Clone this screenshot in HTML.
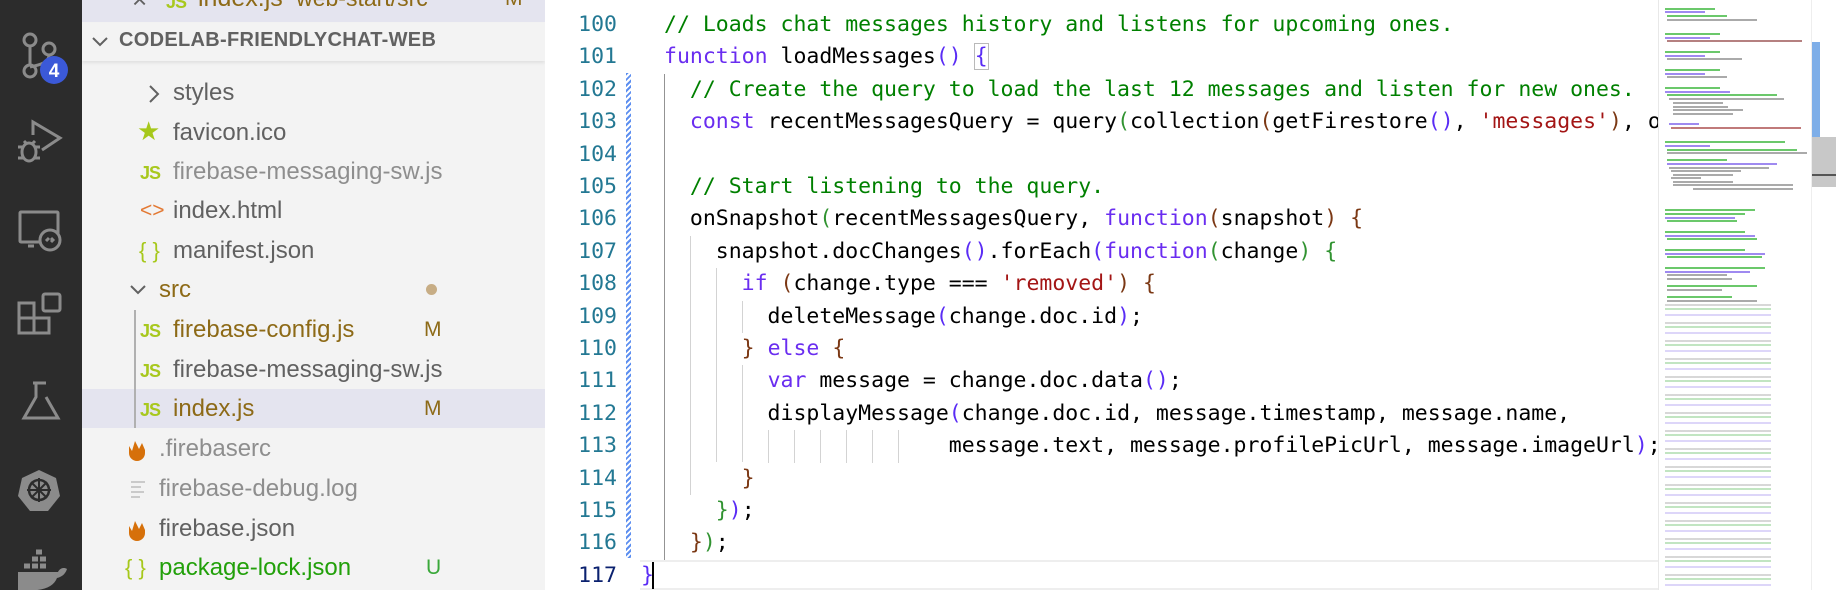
<!DOCTYPE html>
<html><head><meta charset="utf-8"><style>
*{margin:0;padding:0;box-sizing:border-box}
body{width:1836px;height:590px;overflow:hidden;background:#fff;position:relative;font-family:"Liberation Sans",sans-serif}
#act{position:absolute;left:0;top:0;width:82px;height:590px;background:#2c2c2c}
#side{position:absolute;left:82px;top:0;width:463px;height:590px;background:#f3f3f3}
.row{position:absolute;left:0;width:463px;height:40px;line-height:40px;font-size:24px;color:#616161;white-space:nowrap}
.row span.t{position:absolute}
.js{position:absolute;font-weight:bold;font-size:18px;color:#a8c81e;letter-spacing:-1px}
.st{position:absolute;left:423px;font-size:21px}
#ed{position:absolute;left:545px;top:0;width:1113px;height:590px;background:#fff}
.ln{position:absolute;left:545px;width:72px;text-align:right;font-family:"DejaVu Sans Mono",monospace;font-size:21.5px;color:#237893;height:32.4px;line-height:32.4px}
.cl{position:absolute;left:664px;font-family:"DejaVu Sans Mono",monospace;font-size:21.5px;color:#000;white-space:pre;height:32.4px;line-height:32.4px}
.c{color:#008000}.k{color:#6a2df0}.b1{color:#5a2cf5}.b2{color:#319331}.b3{color:#7b3814}.s{color:#a31515}
.g{position:absolute;width:1px;background:#d3d3d3}
#mm{position:absolute;left:1658px;top:0;width:153px;height:590px;background:#fff;overflow:hidden}
.m{position:absolute;height:2px}
</style></head><body>
<div id="act">
<svg width="82" height="590" fill="none" stroke="#8b8b8b" stroke-width="3">
<circle cx="30" cy="40" r="6"/><circle cx="49" cy="49" r="6"/><circle cx="30" cy="71" r="6"/>
<path d="M30 46V65M49 55c0 8-10 10-19 12"/>
<circle cx="54" cy="70" r="14" fill="#3b59d8" stroke="none"/>
<text x="54" y="77" fill="#fff" stroke="none" font-family="Liberation Sans" font-weight="bold" font-size="19" text-anchor="middle">4</text>
<path d="M33 135V122L60 138L42 150"/>
<ellipse cx="29" cy="152" rx="7" ry="9"/><path d="M18 147h6M34 147h6M18 158h6M34 158h6M24 141l3 3M35 141l-3 3"/>
<rect x="20" y="212" width="38" height="30" rx="1"/><path d="M34 246h-6"/><circle cx="50" cy="240" r="10" fill="#2c2c2c"/><path d="M46 241l3-3M51 242l3-3 M51 238l3 3"/>
<rect x="19" y="318" width="15" height="15"/><rect x="34" y="318" width="15" height="15"/><rect x="19" y="303" width="15" height="15"/><rect x="43" y="294" width="17" height="17" rx="2"/>
<path d="M33 383h13M36 383v14L24 418h34L46 397"/>
<path d="M39 470l17 8 4 18-12 15H30L18 496l4-18z" fill="#8b8b8b" stroke="none"/>
<circle cx="39" cy="490" r="10" stroke="#2c2c2c" stroke-width="2.5"/><path d="M39 478v24M27 490h24M31 482l16 16M47 482l-16 16" stroke="#2c2c2c" stroke-width="2"/>
<path d="M18 572h40c2-4 6-5 9-3-2 6-6 8-10 9-4 10-16 14-39 12z" fill="#8b8b8b" stroke="none"/>
<path d="M24 566h6M32 566h6M40 566h6M32 559h6M40 559h6M36 552h6" stroke-width="5"/>
</svg></div>
<div id="side">
<div style="position:absolute;left:0;top:0;width:463px;height:22px;background:#e4e4ef"></div>
<div style="position:absolute;left:50px;top:-16px;font-size:26px;color:#616161">×</div>
<div class="js" style="left:84px;top:-8px">JS</div>
<div style="position:absolute;left:116px;top:-16px;font-size:25px;color:#8d6a17">index.js <span style="font-size:23px">&nbsp;web-start/src</span></div>
<div style="position:absolute;left:423px;top:-13px;font-size:21px;color:#8d6a17">M</div>
<div style="position:absolute;left:0;top:23px;width:463px;height:38px;background:#f3f3f3;box-shadow:0 2px 3px rgba(0,0,0,.08)"></div>
<svg style="position:absolute;left:10px;top:36px" width="16" height="12"><path d="M1 2l7 7 7-7" stroke="#616161" stroke-width="2" fill="none"/></svg>
<div style="position:absolute;left:37px;top:29px;font-size:20px;font-weight:bold;color:#616161;letter-spacing:.3px">CODELAB-FRIENDLYCHAT-WEB</div>

<div class="row" style="top:73px"><svg style="position:absolute;left:66px;top:12px" width="12" height="18"><path d="M2 1l8 8-8 8" stroke="#616161" stroke-width="2" fill="none"/></svg><span class="t" style="left:91px">styles</span></div>
<div class="row" style="top:113px"><span style="position:absolute;left:55px;top:-2px;color:#a6c81a;font-size:26px">★</span><span class="t" style="left:91px">favicon.ico</span></div>
<div class="row" style="top:152px"><span class="js" style="left:58px;top:1px">JS</span><span class="t" style="left:91px;color:#8e8e8e">firebase-messaging-sw.js</span></div>
<div class="row" style="top:191px"><span style="position:absolute;left:58px;color:#e37933;font-size:21px">&lt;&gt;</span><span class="t" style="left:91px">index.html</span></div>
<div class="row" style="top:231px"><span style="position:absolute;left:57px;color:#a6c81a;font-size:22px">{ }</span><span class="t" style="left:91px">manifest.json</span></div>
<div class="row" style="top:270px"><svg style="position:absolute;left:48px;top:14px" width="18" height="12"><path d="M1 2l7 7 7-7" stroke="#616161" stroke-width="2" fill="none"/></svg><span class="t" style="left:77px;color:#8d6a17">src</span><span style="position:absolute;left:344px;top:14px;width:11px;height:11px;border-radius:50%;background:#c7ad85"></span></div>
<div style="position:absolute;left:52px;top:310px;width:2px;height:118px;background:#b0b0b0"></div>
<div class="row" style="top:310px"><span class="js" style="left:58px;top:1px">JS</span><span class="t" style="left:91px;color:#8d6a17">firebase-config.js</span><span class="st" style="color:#8d6a17;left:342px">M</span></div>
<div class="row" style="top:350px"><span class="js" style="left:58px;top:1px">JS</span><span class="t" style="left:91px">firebase-messaging-sw.js</span></div>
<div style="position:absolute;left:0;top:389px;width:463px;height:39px;background:#e4e4ef"></div>
<div style="position:absolute;left:52px;top:389px;width:2px;height:39px;background:#b0b0b0"></div>
<div class="row" style="top:389px"><span class="js" style="left:58px;top:1px">JS</span><span class="t" style="left:91px;color:#8d6a17">index.js</span><span class="st" style="color:#8d6a17;left:342px">M</span></div>
<div class="row" style="top:429px"><svg style="position:absolute;left:45px;top:7px" width="20" height="26"><path d="M2 10l3 5 3-10 4 8 3-6 3 7v3a8 8 0 0 1-16 0z" fill="#d6700a"/></svg><span class="t" style="left:77px;color:#8e8e8e">.firebaserc</span></div>
<div class="row" style="top:469px"><svg style="position:absolute;left:48px;top:10px" width="20" height="20"><path d="M1 3h14M1 8h10M1 13h13M1 18h9" stroke="#bdbdbd" stroke-width="1.5"/></svg><span class="t" style="left:77px;color:#8e8e8e">firebase-debug.log</span></div>
<div class="row" style="top:509px"><svg style="position:absolute;left:45px;top:7px" width="20" height="26"><path d="M2 10l3 5 3-10 4 8 3-6 3 7v3a8 8 0 0 1-16 0z" fill="#d6700a"/></svg><span class="t" style="left:77px">firebase.json</span></div>
<div class="row" style="top:548px"><span style="position:absolute;left:43px;color:#a6c81a;font-size:22px">{ }</span><span class="t" style="left:77px;color:#22a00a">package-lock.json</span><span class="st" style="color:#3aa83a;left:344px">U</span></div>
</div>

<div id="ed"></div>
<div style="position:absolute;left:626px;top:73px;width:5px;height:485px;background:repeating-linear-gradient(135deg,#5d8ff0 0 2px,#fff 2px 4px)"></div>
<div style="position:absolute;left:640px;top:560px;width:1018px;height:30px;border-top:2px solid #eee;border-bottom:2px solid #eee"></div>

<div class="ln" style="top:9px">100</div><div class="ln" style="top:41.4px">101</div><div class="ln" style="top:73.8px">102</div><div class="ln" style="top:106.2px">103</div><div class="ln" style="top:138.6px">104</div><div class="ln" style="top:171px">105</div><div class="ln" style="top:203.4px">106</div><div class="ln" style="top:235.8px">107</div><div class="ln" style="top:268.2px">108</div><div class="ln" style="top:300.6px">109</div><div class="ln" style="top:333px">110</div><div class="ln" style="top:365.4px">111</div><div class="ln" style="top:397.8px">112</div><div class="ln" style="top:430.2px">113</div><div class="ln" style="top:462.6px">114</div><div class="ln" style="top:495px">115</div><div class="ln" style="top:527.4px">116</div><div class="ln" style="top:559.8px;color:#0b216f">117</div>

<div class="g" style="left:664px;top:73.8px;height:486px;background:#939393"></div>
<div class="g" style="left:690px;top:235.8px;height:259px"></div>
<div class="g" style="left:716px;top:268.2px;height:194px"></div>
<div class="g" style="left:742px;top:300.6px;height:32.4px"></div>
<div class="g" style="left:742px;top:365.4px;height:97px"></div>
<div class="g" style="left:768px;top:430.2px;height:32.4px"></div>
<div class="g" style="left:794px;top:430.2px;height:32.4px"></div>
<div class="g" style="left:820px;top:430.2px;height:32.4px"></div>
<div class="g" style="left:846px;top:430.2px;height:32.4px"></div>
<div class="g" style="left:872px;top:430.2px;height:32.4px"></div>
<div class="g" style="left:898px;top:430.2px;height:32.4px"></div>

<div class="cl" style="top:9px"><span class="c">// Loads chat messages history and listens for upcoming ones.</span></div>
<div class="cl" style="top:41.4px"><span class="k">function</span> loadMessages<span class="b1">()</span> <span class="b1" style="outline:1px solid #b9b9b9">{</span></div>
<div class="cl" style="top:73.8px">  <span class="c">// Create the query to load the last 12 messages and listen for new ones.</span></div>
<div class="cl" style="top:106.2px">  <span class="k">const</span> recentMessagesQuery = query<span class="b2">(</span>collection<span class="b3">(</span>getFirestore<span class="b1">()</span>, <span class="s">'messages'</span><span class="b3">)</span>, orderBy</div>
<div class="cl" style="top:171px">  <span class="c">// Start listening to the query.</span></div>
<div class="cl" style="top:203.4px">  onSnapshot<span class="b2">(</span>recentMessagesQuery, <span class="k">function</span><span class="b3">(</span>snapshot<span class="b3">)</span> <span class="b3">{</span></div>
<div class="cl" style="top:235.8px">    snapshot.docChanges<span class="b1">()</span>.forEach<span class="b1">(</span><span class="k">function</span><span class="b2">(</span>change<span class="b2">)</span> <span class="b2">{</span></div>
<div class="cl" style="top:268.2px">      <span class="k">if</span> <span class="b3">(</span>change.type === <span class="s">'removed'</span><span class="b3">)</span> <span class="b3">{</span></div>
<div class="cl" style="top:300.6px">        deleteMessage<span class="b1">(</span>change.doc.id<span class="b1">)</span>;</div>
<div class="cl" style="top:333px">      <span class="b3">}</span> <span class="k">else</span> <span class="b3">{</span></div>
<div class="cl" style="top:365.4px">        <span class="k">var</span> message = change.doc.data<span class="b1">()</span>;</div>
<div class="cl" style="top:397.8px">        displayMessage<span class="b1">(</span>change.doc.id, message.timestamp, message.name,</div>
<div class="cl" style="top:430.2px">                      message.text, message.profilePicUrl, message.imageUrl<span class="b1">)</span>;</div>
<div class="cl" style="top:462.6px">      <span class="b3">}</span></div>
<div class="cl" style="top:495px">    <span class="b2">}</span><span class="b1">)</span>;</div>
<div class="cl" style="top:527.4px">  <span class="b3">}</span><span class="b2">)</span>;</div>
<div class="cl" style="top:559.8px;left:641px"><span class="b1">}</span></div>
<div style="position:absolute;left:652px;top:562px;width:2px;height:27px;background:#000"></div>

<div id="mm">
<div style="position:absolute;left:0;top:0;width:1px;height:590px;background:#e8e8e8"></div>
<div class="m" style="left:7px;top:8px;width:50px;background:#6bc86b"></div>
<div class="m" style="left:7px;top:11px;width:40px;background:#9f8af0"></div>
<div class="m" style="left:9px;top:15px;width:60px;background:#6bc86b"></div>
<div class="m" style="left:9px;top:19px;width:90px;background:#aaa"></div>
<div class="m" style="left:7px;top:33px;width:55px;background:#6bc86b"></div>
<div class="m" style="left:7px;top:37px;width:45px;background:#9f8af0"></div>
<div class="m" style="left:9px;top:40px;width:135px;background:#b58080"></div>
<div class="m" style="left:7px;top:51px;width:55px;background:#6bc86b"></div>
<div class="m" style="left:7px;top:55px;width:40px;background:#9f8af0"></div>
<div class="m" style="left:9px;top:58px;width:75px;background:#aaa"></div>
<div class="m" style="left:7px;top:69px;width:55px;background:#6bc86b"></div>
<div class="m" style="left:7px;top:73px;width:40px;background:#9f8af0"></div>
<div class="m" style="left:9px;top:76px;width:60px;background:#aaa"></div>
<div class="m" style="left:7px;top:87px;width:55px;background:#6bc86b"></div>
<div class="m" style="left:7px;top:91px;width:65px;background:#9f8af0"></div>
<div class="m" style="left:9px;top:94px;width:110px;background:#6bc86b"></div>
<div class="m" style="left:11px;top:98px;width:115px;background:#aaa"></div>
<div class="m" style="left:15px;top:102px;width:50px;background:#aaa"></div>
<div class="m" style="left:15px;top:106px;width:55px;background:#aaa"></div>
<div class="m" style="left:15px;top:109px;width:70px;background:#aaa"></div>
<div class="m" style="left:15px;top:113px;width:60px;background:#aaa"></div>
<div class="m" style="left:11px;top:123px;width:30px;background:#9f8af0"></div>
<div class="m" style="left:13px;top:127px;width:130px;background:#c07a7a"></div>
<div class="m" style="left:7px;top:141px;width:120px;background:#6bc86b"></div>
<div class="m" style="left:7px;top:145px;width:45px;background:#9f8af0"></div>
<div class="m" style="left:9px;top:149px;width:130px;background:#6bc86b"></div>
<div class="m" style="left:9px;top:152px;width:140px;background:#aaa"></div>
<div class="m" style="left:9px;top:159px;width:60px;background:#6bc86b"></div>
<div class="m" style="left:9px;top:163px;width:110px;background:#9f8af0"></div>
<div class="m" style="left:11px;top:167px;width:100px;background:#aaa"></div>
<div class="m" style="left:13px;top:170px;width:70px;background:#aaa"></div>
<div class="m" style="left:15px;top:174px;width:60px;background:#aaa"></div>
<div class="m" style="left:13px;top:177px;width:30px;background:#aaa"></div>
<div class="m" style="left:15px;top:181px;width:60px;background:#aaa"></div>
<div class="m" style="left:15px;top:184px;width:120px;background:#aaa"></div>
<div class="m" style="left:35px;top:188px;width:100px;background:#aaa"></div>
<div class="m" style="left:7px;top:209px;width:90px;background:#6bc86b"></div>
<div class="m" style="left:7px;top:213px;width:80px;background:#6bc86b"></div>
<div class="m" style="left:7px;top:217px;width:70px;background:#9f8af0"></div>
<div class="m" style="left:9px;top:220px;width:70px;background:#6bc86b"></div>
<div class="m" style="left:7px;top:231px;width:80px;background:#6bc86b"></div>
<div class="m" style="left:7px;top:235px;width:90px;background:#9f8af0"></div>
<div class="m" style="left:9px;top:238px;width:90px;background:#6bc86b"></div>
<div class="m" style="left:7px;top:249px;width:80px;background:#6bc86b"></div>
<div class="m" style="left:7px;top:253px;width:100px;background:#9f8af0"></div>
<div class="m" style="left:9px;top:256px;width:95px;background:#6bc86b"></div>
<div class="m" style="left:7px;top:267px;width:100px;background:#6bc86b"></div>
<div class="m" style="left:7px;top:271px;width:85px;background:#9f8af0"></div>
<div class="m" style="left:9px;top:274px;width:60px;background:#aaa"></div>
<div class="m" style="left:9px;top:278px;width:65px;background:#aaa"></div>
<div class="m" style="left:9px;top:285px;width:90px;background:#6bc86b"></div>
<div class="m" style="left:9px;top:289px;width:55px;background:#aaa"></div>
<div class="m" style="left:9px;top:296px;width:65px;background:#6bc86b"></div>
<div class="m" style="left:9px;top:300px;width:90px;background:#aaa"></div>
<div style="position:absolute;left:0;top:300px;width:153px;height:290px;background:repeating-linear-gradient(180deg,transparent 0 4px,#b7b7b7 4px 6px,transparent 6px 8px,#8fd08f 8px 10px,transparent 10px 14px,#c1b4f4 14px 16px,transparent 16px 18px);opacity:.55;clip-path:inset(0 40px 0 7px)"></div>
</div>
<div style="position:absolute;left:1811px;top:0;width:25px;height:590px;background:#fff;border-left:1px solid #eee"></div>
<div style="position:absolute;left:1812px;top:42px;width:8px;height:95px;background:#7eaee8"></div>
<div style="position:absolute;left:1812px;top:137px;width:24px;height:50px;background:#c8c8c8"></div>
<div style="position:absolute;left:1812px;top:174px;width:24px;height:2px;background:#555"></div>
</body></html>
